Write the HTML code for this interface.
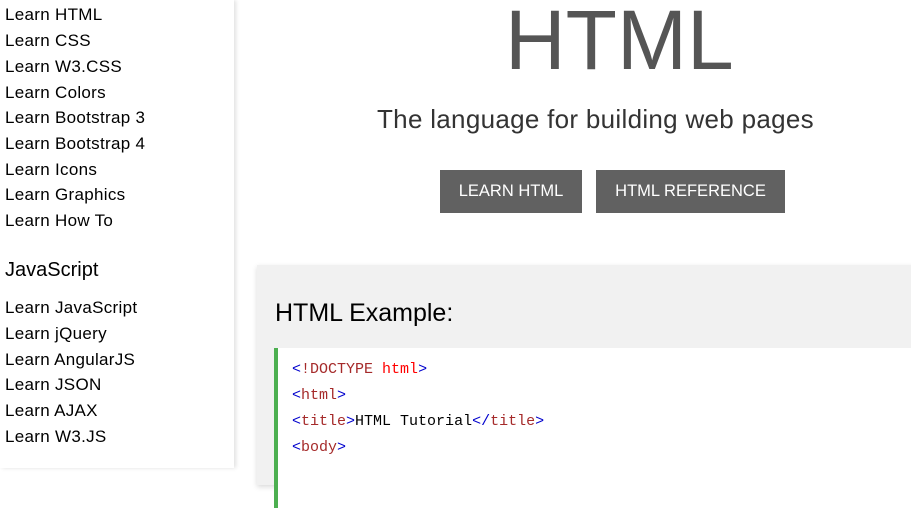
<!DOCTYPE html>
<html><head><style>
body{margin:0;width:911px;height:468px;overflow:hidden;position:relative;background:#fff;font-family:"Liberation Sans",sans-serif;color:#000}
.side{position:absolute;left:0;top:0;width:234px;height:468px;background:#fff;box-shadow:2px 0 4px rgba(0,0,0,.12)}
.side a{display:block;position:absolute;left:5px;font-size:17px;color:#000;text-decoration:none;letter-spacing:.3px}
.h{position:absolute;left:5px;top:259px;font-size:20px}
.t{position:absolute;left:505px;top:-8px;font-size:84px;color:#555}
.s{position:absolute;left:377px;top:104px;font-size:26px;color:#333;letter-spacing:.3px}
.b{position:absolute;top:170px;height:43px;background:#616161;color:#fff;font-size:16.5px;line-height:43px;text-align:center}
.panel{position:absolute;left:257px;top:265px;width:680px;height:220px;background:#f1f1f1;box-shadow:0 2px 5px rgba(0,0,0,.15)}
.panel h2{position:absolute;left:18px;top:34px;margin:0;font-weight:normal;font-size:25px;color:#000}
.code{position:absolute;left:17px;top:83px;width:700px;height:160px;background:#fff;border-left:4px solid #4caf50;font-family:"Liberation Mono",monospace;font-size:15px}
.code div{position:absolute;left:14px}
.tg{color:#a52a2a}.br{color:#0000cd}.at{color:red}
</style></head><body>
<div class="side">
<a style="top:5px">Learn HTML</a>
<a style="top:31px">Learn CSS</a>
<a style="top:57px">Learn W3.CSS</a>
<a style="top:83px">Learn Colors</a>
<a style="top:108px">Learn Bootstrap 3</a>
<a style="top:134px">Learn Bootstrap 4</a>
<a style="top:160px">Learn Icons</a>
<a style="top:185px">Learn Graphics</a>
<a style="top:211px">Learn How To</a>
<div class="h">JavaScript</div>
<a style="top:298px">Learn JavaScript</a>
<a style="top:324px">Learn jQuery</a>
<a style="top:350px">Learn AngularJS</a>
<a style="top:375px">Learn JSON</a>
<a style="top:401px">Learn AJAX</a>
<a style="top:427px">Learn W3.JS</a>
</div>
<div class="t">HTML</div>
<div class="s">The language for building web pages</div>
<div class="b" style="left:440px;width:142px">LEARN HTML</div>
<div class="b" style="left:596px;width:189px">HTML REFERENCE</div>
<div class="panel"><h2>HTML Example:</h2>
<div class="code">
<div style="top:13px"><span class="br">&lt;</span><span class="tg">!DOCTYPE</span> <span class="at">html</span><span class="br">&gt;</span></div>
<div style="top:39px"><span class="br">&lt;</span><span class="tg">html</span><span class="br">&gt;</span></div>
<div style="top:65px"><span class="br">&lt;</span><span class="tg">title</span><span class="br">&gt;</span>HTML Tutorial<span class="br">&lt;/</span><span class="tg">title</span><span class="br">&gt;</span></div>
<div style="top:91px"><span class="br">&lt;</span><span class="tg">body</span><span class="br">&gt;</span></div>
</div></div>
</body></html>
